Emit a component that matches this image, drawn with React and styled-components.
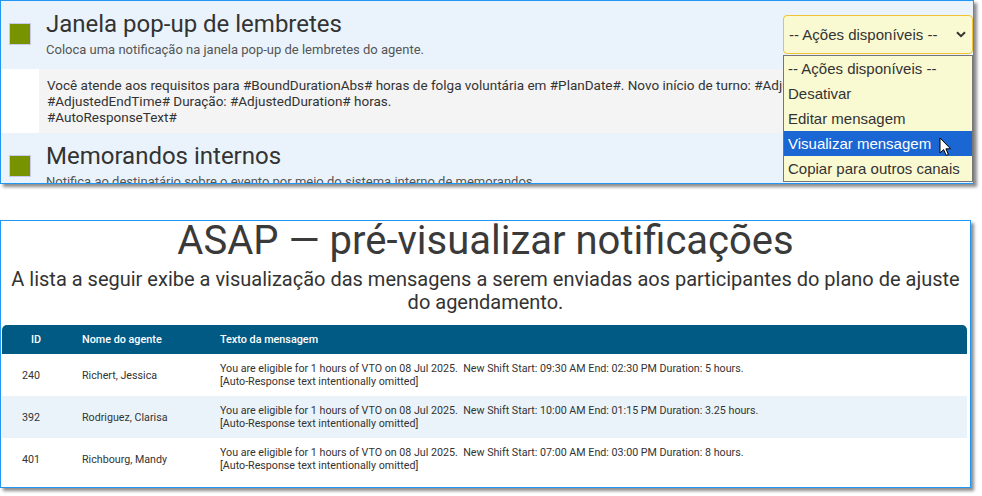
import React from "react";
import styled, { createGlobalStyle } from "styled-components";

const Global = createGlobalStyle`
  html, body { margin: 0; padding: 0; background: #fff; }
  body { font-family: Roboto, "Liberation Sans", Arial, sans-serif; }
  * { box-sizing: border-box; }
`;

const Page = styled.div`
  width: 982px;
  height: 496px;
  overflow: hidden;
  display: flex;
  flex-direction: column;
  align-items: flex-start;
`;

const Panel = styled.div`
  position: relative;
  width: ${(p) => p.$w}px;
  height: ${(p) => p.$h}px;
  margin-top: ${(p) => p.$mt || 0}px;
  border: 1px solid #2196f3;
  background: #fff;
  box-shadow: 3px 3px 3px rgba(0, 0, 0, 0.45);
  overflow: hidden;
  display: flex;
  flex-direction: column;
`;

const ChannelRow = styled.div`
  display: flex;
  align-items: flex-start;
  flex-shrink: 0;
  height: 68px;
  background: #eaf3fb;
`;

const Square = styled.div`
  width: 22px;
  height: 22px;
  margin: 22px 0 0 8px;
  border: 1px solid #c9c9ef;
  background: #789300;
  flex-shrink: 0;
`;

const ChannelText = styled.div`
  margin-left: 15px;
  padding-top: 9px;
  display: flex;
  flex-direction: column;
`;

const ChannelTitle = styled.div`
  font-size: 24px;
  line-height: 28px;
  color: #333;
  white-space: nowrap;
`;

const ChannelDesc = styled.div`
  margin-top: 4px;
  font-size: 13px;
  line-height: 16px;
  color: #555;
  white-space: nowrap;
`;

const MessageRow = styled.div`
  flex-shrink: 0;
  height: 64px;
  margin-left: 38px;
  padding: 8px 8px;
  background: #f4f4f4;
  font-size: 13.5px;
  line-height: 16px;
  color: #333;
  white-space: nowrap;
`;

const SelectWrap = styled.div`
  position: relative;
  margin: 14px 0 0 auto;
  width: 190px;
`;

const SelectBox = styled.div`
  height: 39px;
  display: flex;
  align-items: center;
  justify-content: space-between;
  padding: 0 6px 0 5px;
  background: #fafad2;
  border: 1px solid #f1c232;
  border-radius: 4px;
  font-family: "Liberation Sans", Arial, sans-serif;
  font-size: 15px;
  color: #333;
`;

const Options = styled.div`
  position: absolute;
  top: 40px;
  left: 0;
  width: 190px;
  background: #fafad2;
  border: 1px solid #767676;
  font-family: "Liberation Sans", Arial, sans-serif;
  font-size: 15px;
  color: #333;
  z-index: 5;
`;

const Option = styled.div`
  height: 25px;
  line-height: 25px;
  padding-left: 4px;
  white-space: nowrap;
  background: ${(p) => (p.$active ? "#1a66d2" : "transparent")};
  color: ${(p) => (p.$active ? "#fff" : "#333")};
`;

const Cursor = styled.svg`
  position: absolute;
  left: 156px;
  top: 122px;
  z-index: 6;
`;

const PreviewTitle = styled.div`
  font-size: 40px;
  line-height: 40px;
  color: #3a3a3a;
  text-align: center;
`;

const PreviewSub = styled.div`
  margin-top: 7px;
  font-size: 20px;
  line-height: 23px;
  color: #333;
  text-align: center;
`;

const Table = styled.div`
  margin: 11px 0 0 1px;
  width: 965px;
  display: flex;
  flex-direction: column;
`;

const HeaderRow = styled.div`
  display: grid;
  grid-template-columns: 80px 138px 1fr;
  align-items: center;
  height: 29px;
  background: #015a83;
  border-radius: 5px 5px 0 0;
  color: #fff;
  font-size: 10.8px;
  font-weight: 500;
`;

const HeadCell = styled.div`
  padding-left: ${(p) => p.$pl || 0}px;
  white-space: nowrap;
`;

const BodyRow = styled.div`
  display: grid;
  grid-template-columns: 80px 138px 1fr;
  align-items: center;
  height: 42px;
  background: ${(p) => (p.$alt ? "#eaf3fa" : "#fff")};
  color: #333;
  font-size: 10.7px;
  line-height: 13px;
`;

const Cell = styled.div`
  padding-left: ${(p) => p.$pl || 0}px;
  white-space: pre;
`;

const rows = [
  { id: "240", name: "Richert, Jessica", start: "09:30 AM", end: "02:30 PM", dur: "5" },
  { id: "392", name: "Rodriguez, Clarisa", start: "10:00 AM", end: "01:15 PM", dur: "3.25" },
  { id: "401", name: "Richbourg, Mandy", start: "07:00 AM", end: "03:00 PM", dur: "8" },
];

const Chevron = () => (
  <svg width="10" height="7" viewBox="0 0 10 7">
    <path d="M1 1.2 L5 5.2 L9 1.2" fill="none" stroke="#333" strokeWidth="2" />
  </svg>
);

export default function App() {
  return (
    <>
      <Global />
      <Page>
        <Panel $w={974} $h={184}>
          <ChannelRow>
            <Square />
            <ChannelText>
              <ChannelTitle>Janela pop-up de lembretes</ChannelTitle>
              <ChannelDesc>Coloca uma notificação na janela pop-up de lembretes do agente.</ChannelDesc>
            </ChannelText>
            <SelectWrap>
              <SelectBox>
                <span>-- Ações disponíveis --</span>
                <Chevron />
              </SelectBox>
              <Options>
                <Option>-- Ações disponíveis --</Option>
                <Option>Desativar</Option>
                <Option>Editar mensagem</Option>
                <Option $active>Visualizar mensagem</Option>
                <Option>Copiar para outros canais</Option>
              </Options>
              <Cursor width="13" height="20" viewBox="0 0 13 20">
                <path
                  d="M1 1 L1 16 L4.6 12.6 L7.2 18.4 L9.4 17.4 L6.9 11.8 L11.6 11.8 Z"
                  fill="#fff"
                  stroke="#000"
                  strokeWidth="1"
                  strokeLinejoin="round"
                />
              </Cursor>
            </SelectWrap>
          </ChannelRow>
          <MessageRow>
            Você atende aos requisitos para #BoundDurationAbs# horas de folga voluntária em #PlanDate#. Novo início de turno: #AdjustedStartTime# Fim:
            <br />
            #AdjustedEndTime# Duração: #AdjustedDuration# horas.
            <br />
            #AutoResponseText#
          </MessageRow>
          <ChannelRow>
            <Square />
            <ChannelText>
              <ChannelTitle>Memorandos internos</ChannelTitle>
              <ChannelDesc>Notifica ao destinatário sobre o evento por meio do sistema interno de memorandos.</ChannelDesc>
            </ChannelText>
          </ChannelRow>
        </Panel>

        <Panel $w={971} $h={268} $mt={36}>
          <PreviewTitle>ASAP — pré-visualizar notificações</PreviewTitle>
          <PreviewSub>
            A lista a seguir exibe a visualização das mensagens a serem enviadas aos participantes do plano de ajuste
            <br />
            do agendamento.
          </PreviewSub>
          <Table>
            <HeaderRow>
              <HeadCell $pl={29}>ID</HeadCell>
              <HeadCell>Nome do agente</HeadCell>
              <HeadCell>Texto da mensagem</HeadCell>
            </HeaderRow>
            {rows.map((r, i) => (
              <BodyRow key={r.id} $alt={i === 1}>
                <Cell $pl={20}>{r.id}</Cell>
                <Cell>{r.name}</Cell>
                <Cell>
                  {`You are eligible for 1 hours of VTO on 08 Jul 2025.  New Shift Start: ${r.start} End: ${r.end} Duration: ${r.dur} hours.`}
                  {"\n"}
                  [Auto-Response text intentionally omitted]
                </Cell>
              </BodyRow>
            ))}
          </Table>
        </Panel>
      </Page>
    </>
  );
}
